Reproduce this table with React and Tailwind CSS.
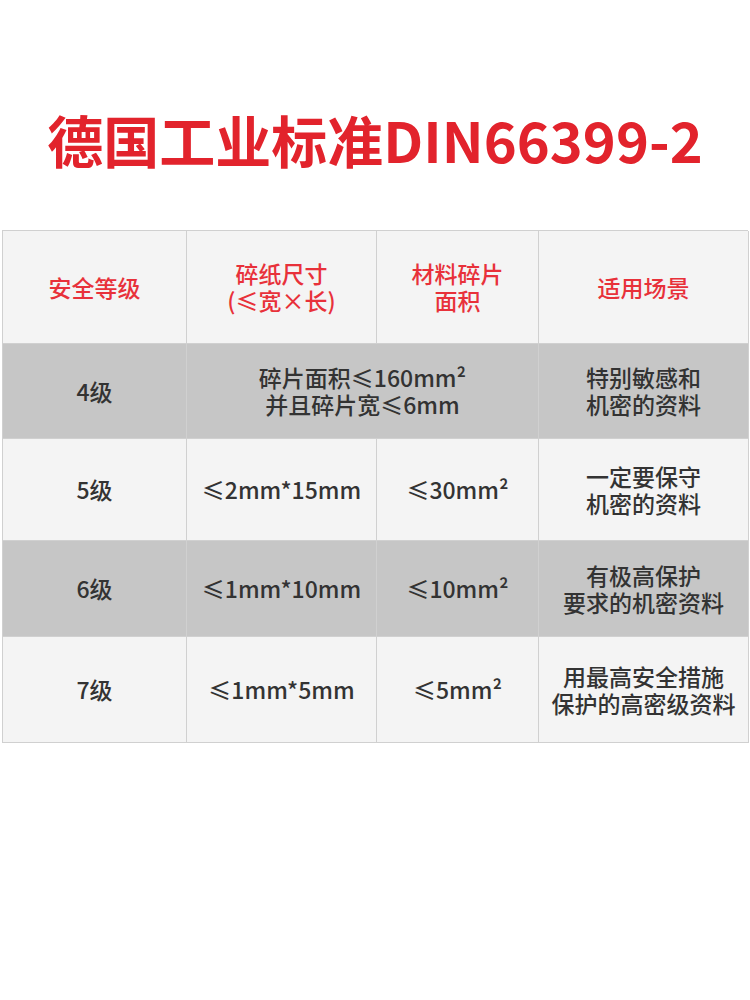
export default function App() {
  const font = { fontFamily: '"Noto Sans CJK SC", "Noto Sans", sans-serif' };
  const cell = "flex items-center justify-center text-center border-r border-b border-[#d0d0d0] text-[23px] leading-[27px] font-medium text-[#333]";
  const rows = [
    { h: "h-[95px]", bg: "bg-[#c6c6c6]", lvl: "4级", merged: ["碎片面积≤160mm²", "并且碎片宽≤6mm"], use: ["特别敏感和", "机密的资料"] },
    { h: "h-[102px]", bg: "bg-[#f4f4f4]", lvl: "5级", size: "≤2mm*15mm", area: "≤30mm²", use: ["一定要保守", "机密的资料"] },
    { h: "h-[96px]", bg: "bg-[#c6c6c6]", lvl: "6级", size: "≤1mm*10mm", area: "≤10mm²", use: ["有极高保护", "要求的机密资料"] },
    { h: "h-[106px]", bg: "bg-[#f4f4f4]", lvl: "7级", size: "≤1mm*5mm", area: "≤5mm²", use: ["用最高安全措施", "保护的高密级资料"] },
  ];
  return (
    <div className="w-[750px] h-[1000px] bg-white" style={font}>
      <div className="h-[230px] flex justify-center pt-[107px]">
        <h1 className="text-[56px] leading-[64px] font-bold text-[#e2232c] h-[64px]">德国工业标准DIN66399-2</h1>
      </div>
      <div className="mx-[2px] border-t border-l border-[#d0d0d0] grid grid-cols-[184px_190px_162px_210px]">
        <div className={`${cell} h-[113px] bg-[#f4f4f4] !text-[#e8313a]`}>安全等级</div>
        <div className={`${cell} h-[113px] bg-[#f4f4f4] !text-[#e8313a] flex-col`}><span>碎纸尺寸</span><span>(≤宽×长)</span></div>
        <div className={`${cell} h-[113px] bg-[#f4f4f4] !text-[#e8313a] flex-col`}><span>材料碎片</span><span>面积</span></div>
        <div className={`${cell} h-[113px] bg-[#f4f4f4] !text-[#e8313a]`}>适用场景</div>
        {rows.map((r, i) => (
          <div key={i} className="contents">
            <div className={`${cell} ${r.h} ${r.bg}`}>{r.lvl}</div>
            {r.merged ? (
              <div className={`${cell} ${r.h} ${r.bg} col-span-2 flex-col`}>
                <span>{r.merged[0]}</span>
                <span>{r.merged[1]}</span>
              </div>
            ) : (
              <>
                <div className={`${cell} ${r.h} ${r.bg}`}>{r.size}</div>
                <div className={`${cell} ${r.h} ${r.bg}`}>{r.area}</div>
              </>
            )}
            <div className={`${cell} ${r.h} ${r.bg} flex-col`}>
              <span>{r.use[0]}</span>
              <span>{r.use[1]}</span>
            </div>
          </div>
        ))}
      </div>
    </div>
  );
}
